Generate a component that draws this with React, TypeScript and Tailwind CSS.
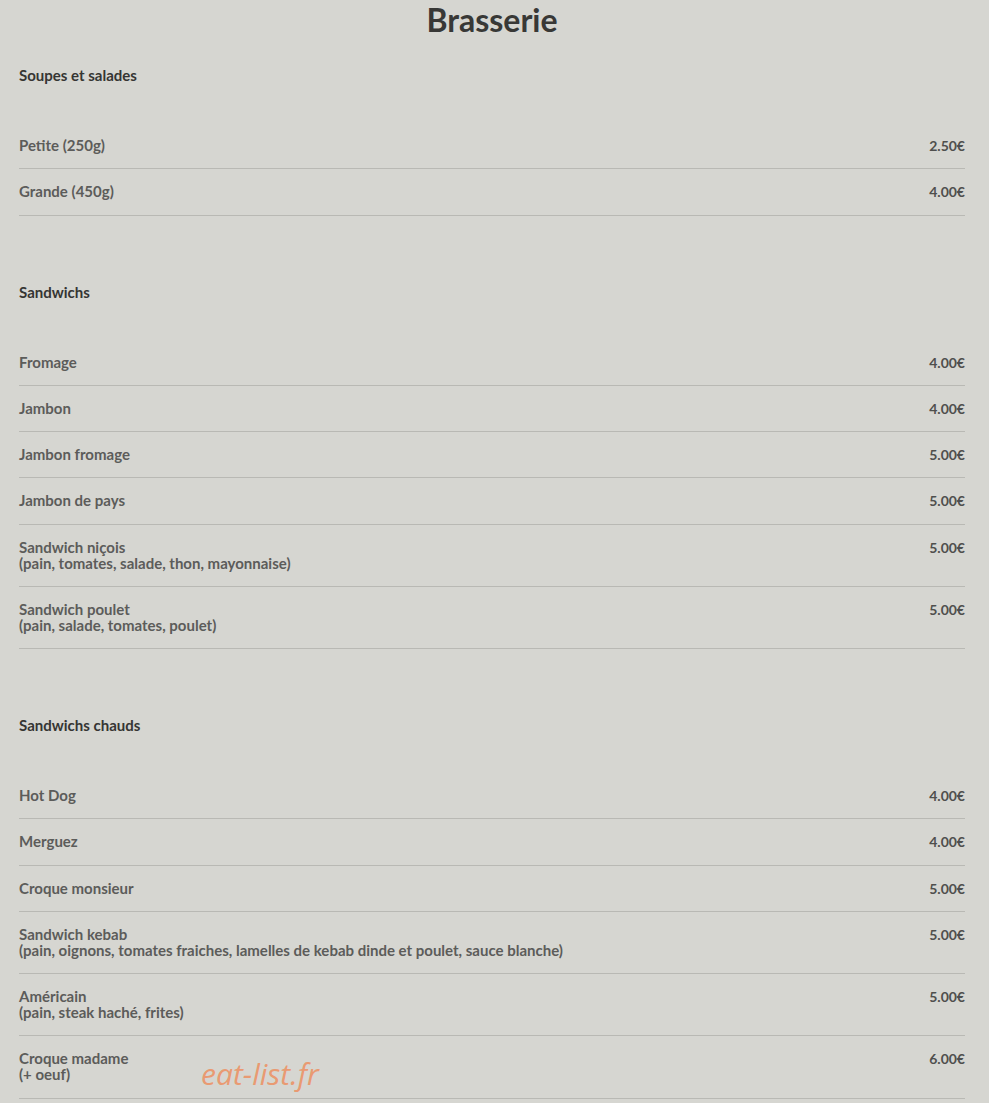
type Item = { name: string; desc?: string; price: string };
type Section = { title: string; items: Item[] };

const SECTIONS: Section[] = [
  {
    title: 'Soupes et salades',
    items: [
      { name: 'Petite (250g)', price: '2.50€' },
      { name: 'Grande (450g)', price: '4.00€' },
    ],
  },
  {
    title: 'Sandwichs',
    items: [
      { name: 'Fromage', price: '4.00€' },
      { name: 'Jambon', price: '4.00€' },
      { name: 'Jambon fromage', price: '5.00€' },
      { name: 'Jambon de pays', price: '5.00€' },
      { name: 'Sandwich niçois', desc: '(pain, tomates, salade, thon, mayonnaise)', price: '5.00€' },
      { name: 'Sandwich poulet', desc: '(pain, salade, tomates, poulet)', price: '5.00€' },
    ],
  },
  {
    title: 'Sandwichs chauds',
    items: [
      { name: 'Hot Dog', price: '4.00€' },
      { name: 'Merguez', price: '4.00€' },
      { name: 'Croque monsieur', price: '5.00€' },
      {
        name: 'Sandwich kebab',
        desc: '(pain, oignons, tomates fraiches, lamelles de kebab dinde et poulet, sauce blanche)',
        price: '5.00€',
      },
      { name: 'Américain', desc: '(pain, steak haché, frites)', price: '5.00€' },
      { name: 'Croque madame', desc: '(+ oeuf)', price: '6.00€' },
    ],
  },
];

function MenuRow({ item }: { item: Item }) {
  return (
    <div className="flex items-start justify-between border-b border-[#b9b9b4] pt-[14px] pb-[15.25px] text-[15px] leading-[16px] font-bold text-[#5c5c5a]">
      <div>
        <div>{item.name}</div>
        {item.desc && <div>{item.desc}</div>}
      </div>
      <div className="pt-[1px] text-[14px] leading-[15px] text-[#4f4f4d]">{item.price}</div>
    </div>
  );
}

export default function App() {
  return (
    <div
      className="relative h-[1103px] overflow-hidden bg-[#d6d6d1] pl-[19px] pr-[24px]"
      style={{ fontFamily: 'Lato, "Open Sans", sans-serif' }}
    >
      <h1 className="text-center text-[32px] leading-[40px] font-bold text-[#383836]">Brasserie</h1>

      {SECTIONS.map((s, i) => (
        <section key={s.title} className={i === 0 ? 'mt-[27px]' : 'mt-[68px]'}>
          <h2 className="mb-[40px] text-[15px] leading-[16px] font-bold text-[#353533]">{s.title}</h2>
          {s.items.map((it) => (
            <MenuRow key={it.name} item={it} />
          ))}
        </section>
      ))}

      <div
        className="absolute left-[201px] top-[1051px] text-[30px] italic text-[#e99a72]"
        style={{ fontFamily: '"Open Sans", sans-serif' }}
      >
        eat-list.fr
      </div>
    </div>
  );
}
